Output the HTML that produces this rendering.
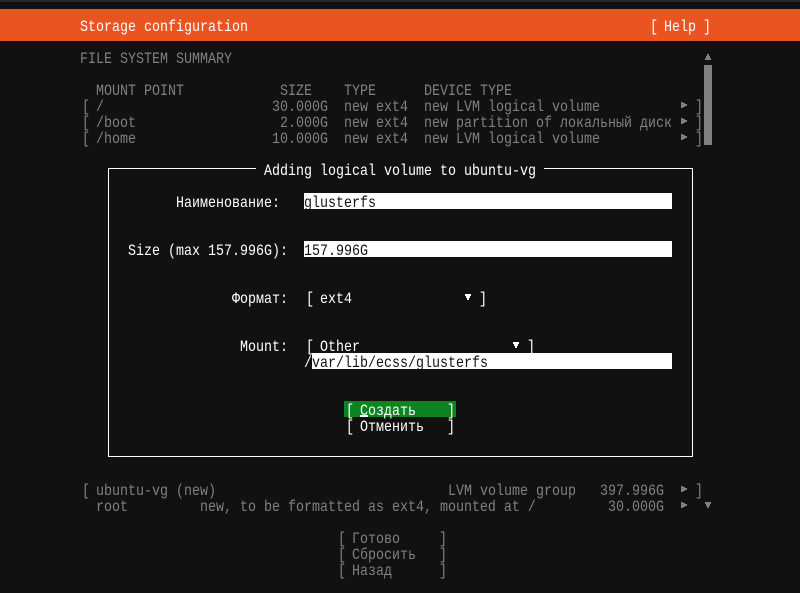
<!DOCTYPE html>
<html lang="ru">
<head>
<meta charset="utf-8">
<title>Storage configuration</title>
<style>
html,body{margin:0;padding:0;width:800px;height:593px;overflow:hidden;background:#111111}
body{position:relative;font-family:"Liberation Mono","DejaVu Sans Mono",monospace;font-size:13.33px;color:#808080}
.r{position:absolute;left:0;height:16px;line-height:16px;white-space:pre;width:500px;transform:translateY(3px) scaleY(1.18);transform-origin:0 11px}
.w{color:#fff}
.b{position:absolute;background:#fff}
.k{color:#111}
.o{position:relative;left:2px}
.c{position:relative;left:-1px}
svg{position:absolute;left:0;top:0}
</style>
</head>
<body>
<div class="b" style="left:0;top:0;width:800px;height:2px;background:#2a2a2a"></div>
<div class="b" style="left:0;top:9px;width:800px;height:32px;background:#e95420"></div>
<div class="r w" style="top:18px;left:80px">Storage configuration</div>
<div class="r w" style="top:18px;left:648px;width:100px"><span class="o">[</span> Help <span class="c">]</span></div>

<div class="r" style="top:50px;left:80px">FILE SYSTEM SUMMARY</div>
<div class="r" style="top:82px;left:96px">MOUNT POINT</div>
<div class="r" style="top:82px;left:280px">SIZE</div>
<div class="r" style="top:82px;left:344px">TYPE</div>
<div class="r" style="top:82px;left:424px">DEVICE TYPE</div>

<div class="r" style="top:98px;left:80px"><span class="o">[</span> /</div>
<div class="r" style="top:98px;left:272px">30.000G</div>
<div class="r" style="top:98px;left:344px">new ext4</div>
<div class="r" style="top:98px;left:424px">new LVM logical volume</div>
<div class="r" style="top:98px;left:696px;width:20px"><span class="c">]</span></div>

<div class="r" style="top:114px;left:80px"><span class="o">[</span> /boot</div>
<div class="r" style="top:114px;left:280px">2.000G</div>
<div class="r" style="top:114px;left:344px">new ext4</div>
<div class="r" style="top:114px;left:424px">new partition of локальный диск</div>
<div class="r" style="top:114px;left:696px;width:20px"><span class="c">]</span></div>

<div class="r" style="top:130px;left:80px"><span class="o">[</span> /home</div>
<div class="r" style="top:130px;left:272px">10.000G</div>
<div class="r" style="top:130px;left:344px">new ext4</div>
<div class="r" style="top:130px;left:424px">new LVM logical volume</div>
<div class="r" style="top:130px;left:696px;width:20px"><span class="c">]</span></div>

<div class="b" style="left:704px;top:65px;width:8px;height:80px;background:#808080"></div>

<!-- dialog frame -->
<div class="b" style="left:108px;top:168px;width:148px;height:1px"></div>
<div class="b" style="left:544px;top:168px;width:149px;height:1px"></div>
<div class="b" style="left:108px;top:168px;width:1px;height:289px"></div>
<div class="b" style="left:692px;top:168px;width:1px;height:289px"></div>
<div class="b" style="left:108px;top:456px;width:585px;height:1px"></div>
<div class="r w" style="top:162px;left:264px">Adding logical volume to ubuntu-vg</div>

<div class="r w" style="top:194px;left:176px">Наименование:</div>
<div class="b" style="left:304px;top:193px;width:368px;height:16px"></div>
<div class="r k" style="top:194px;left:304px">glusterfs</div>

<div class="r w" style="top:242px;left:128px">Size (max 157.996G):</div>
<div class="b" style="left:304px;top:241px;width:368px;height:16px"></div>
<div class="r k" style="top:242px;left:304px">157.996G</div>

<div class="r w" style="top:290px;left:232px">Формат:</div>
<div class="r w" style="top:290px;left:304px"><span class="o">[</span> ext4</div>
<div class="r w" style="top:290px;left:480px;width:20px"><span class="c">]</span></div>

<div class="r w" style="top:338px;left:240px">Mount:</div>
<div class="r w" style="top:338px;left:304px"><span class="o">[</span> Other</div>
<div class="r w" style="top:338px;left:528px;width:20px"><span class="c">]</span></div>

<div class="b" style="left:312px;top:353px;width:360px;height:16px"></div>
<div class="r w" style="top:354px;left:304px;width:8px">/</div>
<div class="r k" style="top:354px;left:312px">var/lib/ecss/glusterfs</div>

<div class="b" style="left:344px;top:401px;width:112px;height:16px;background:#0e8420"></div>
<div class="r w" style="top:402px;left:344px"><span class="o">[</span> Создать</div>
<div class="r w" style="top:402px;left:448px;width:20px"><span class="c">]</span></div>
<div class="b" style="left:360px;top:415px;width:8px;height:2px"></div>
<div class="r w" style="top:418px;left:344px"><span class="o">[</span> Отменить</div>
<div class="r w" style="top:418px;left:448px;width:20px"><span class="c">]</span></div>

<!-- lower list -->
<div class="r" style="top:482px;left:80px"><span class="o">[</span> ubuntu-vg (new)</div>
<div class="r" style="top:482px;left:448px">LVM volume group</div>
<div class="r" style="top:482px;left:600px">397.996G</div>
<div class="r" style="top:482px;left:696px;width:20px"><span class="c">]</span></div>
<div class="r" style="top:498px;left:96px">root</div>
<div class="r" style="top:498px;left:200px">new, to be formatted as ext4, mounted at /</div>
<div class="r" style="top:498px;left:608px">30.000G</div>

<div class="r" style="top:530px;left:336px"><span class="o">[</span> Готово</div>
<div class="r" style="top:530px;left:440px;width:20px"><span class="c">]</span></div>
<div class="r" style="top:546px;left:336px"><span class="o">[</span> Сбросить</div>
<div class="r" style="top:546px;left:440px;width:20px"><span class="c">]</span></div>
<div class="r" style="top:562px;left:336px"><span class="o">[</span> Назад</div>
<div class="r" style="top:562px;left:440px;width:20px"><span class="c">]</span></div>

<svg width="800" height="593" viewBox="0 0 800 593" shape-rendering="crispEdges">
  <g fill="#808080">
    <path d="M707 54H709V56H710V58H711V60H705V58H706V56H707Z"/>
    <path d="M681 102H683V103H685V104H687V106H685V107H683V108H681Z"/>
    <path d="M681 118H683V119H685V120H687V122H685V123H683V124H681Z"/>
    <path d="M681 134H683V135H685V136H687V138H685V139H683V140H681Z"/>
    <path d="M681 486H683V487H685V488H687V490H685V491H683V492H681Z"/>
    <path d="M681 502H683V503H685V504H687V506H685V507H683V508H681Z"/>
    <path d="M705 502H711V504H710V506H709V508H707V506H706V504H705Z"/>
  </g>
  <g fill="#ffffff">
    <path d="M465 294H471V296H470V298H469V300H467V298H466V296H465Z"/>
    <path d="M513 342H519V344H518V346H517V348H515V346H514V344H513Z"/>
  </g>
</svg>
</body>
</html>
